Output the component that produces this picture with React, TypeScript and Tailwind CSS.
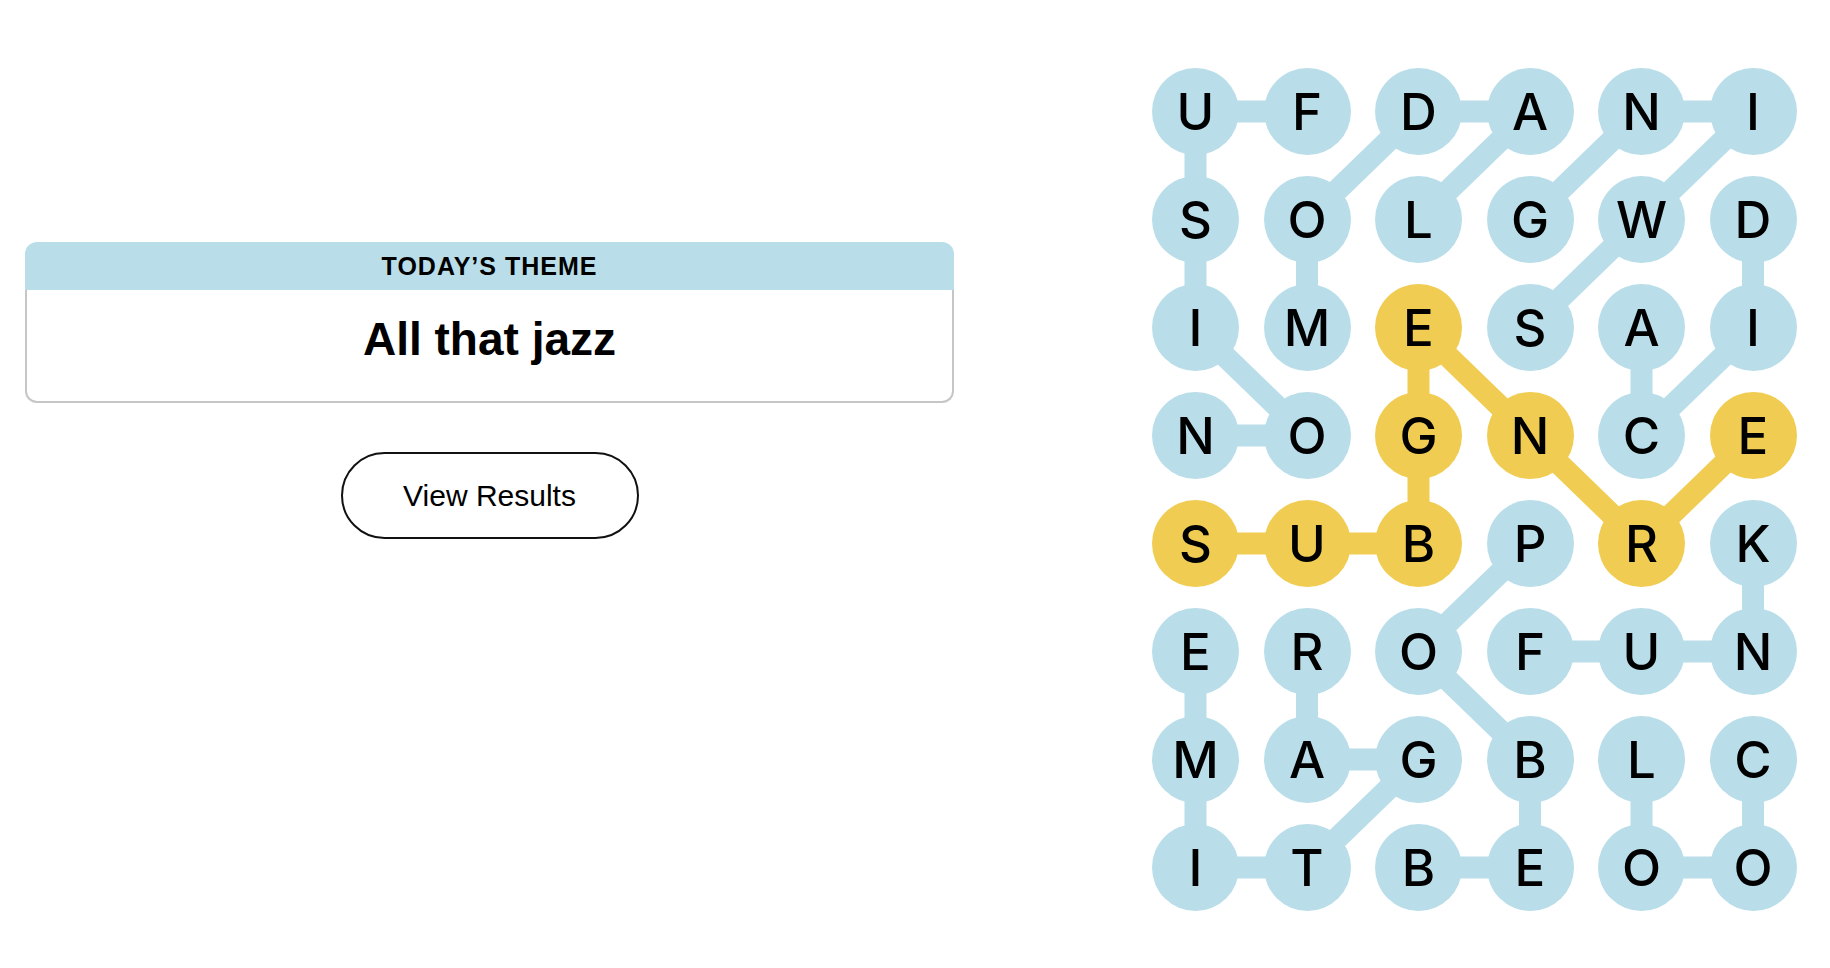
import React from "react";

const ROWS = ["UFDANI", "SOLGWD", "IMESAI", "NOGNCE", "SUBPRK", "EROFUN", "MAGBLC", "ITBEOO"];

const SPANGRAM = ["4,0", "4,1", "4,2", "3,2", "2,2", "3,3", "4,4", "3,5"];

// [row, col, row, col]
const WORD_LINKS = [
  // fusion
  [0, 1, 0, 0], [0, 0, 1, 0], [1, 0, 2, 0], [2, 0, 3, 1], [3, 1, 3, 0],
  // modal
  [2, 1, 1, 1], [1, 1, 0, 2], [0, 2, 0, 3], [0, 3, 1, 2],
  // swing
  [2, 3, 1, 4], [1, 4, 0, 5], [0, 5, 0, 4], [0, 4, 1, 3],
  // acid
  [2, 4, 3, 4], [3, 4, 2, 5], [2, 5, 1, 5],
  // funk
  [5, 3, 5, 4], [5, 4, 5, 5], [5, 5, 4, 5],
  // bebop
  [7, 2, 7, 3], [7, 3, 6, 3], [6, 3, 5, 2], [5, 2, 4, 3],
  // ragtime
  [5, 1, 6, 1], [6, 1, 6, 2], [6, 2, 7, 1], [7, 1, 7, 0], [7, 0, 6, 0], [6, 0, 5, 0],
  // cool
  [6, 5, 7, 5], [7, 5, 7, 4], [7, 4, 6, 4],
];

const SPAN_LINKS = [
  [4, 0, 4, 1], [4, 1, 4, 2], [4, 2, 3, 2], [3, 2, 2, 2], [2, 2, 3, 3], [3, 3, 4, 4], [4, 4, 3, 5],
];

const cx = (c: number) => 43.5 + c * 111.5;
const cy = (r: number) => 43.5 + r * 108;

const Board = () => {
  return (
    <div className="relative">
      <svg className="absolute inset-0" width="645" height="843">
        {WORD_LINKS.map(([r1, c1, r2, c2], i) => (
          <line key={"w" + i} x1={cx(c1)} y1={cy(r1)} x2={cx(c2)} y2={cy(r2)} stroke="#b9deea" strokeWidth="22" />
        ))}
        {SPAN_LINKS.map(([r1, c1, r2, c2], i) => (
          <line key={"s" + i} x1={cx(c1)} y1={cy(r1)} x2={cx(c2)} y2={cy(r2)} stroke="#f0cd52" strokeWidth="22" />
        ))}
      </svg>
      <div className="relative grid grid-cols-[repeat(6,87px)] gap-x-[24.5px] gap-y-[21px]">
        {ROWS.map((row, r) =>
          row.split("").map((ch, c) => (
            <div
              key={r + "-" + c}
              className={
                "flex h-[87px] w-[87px] items-center justify-center rounded-full text-[51px] font-medium leading-none text-black " +
                (SPANGRAM.includes(r + "," + c) ? "bg-[#f0cd52]" : "bg-[#b9deea]")
              }
            >
              {ch}
            </div>
          ))
        )}
      </div>
    </div>
  );
};

export default function App() {
  return (
    <div className="flex min-h-[968px] w-full bg-white font-['Inter',sans-serif]">
      <div className="w-[979px] px-[25px] pt-[242px] font-['Liberation_Sans',Arial,sans-serif]">
        <div className="flex flex-col">
          <div className="flex h-[48px] items-center justify-center rounded-t-[12px] bg-[#b9deea] pt-[2px]">
            <span className="text-[25px] font-bold tracking-[1px] text-black">TODAY’S THEME</span>
          </div>
          <div className="flex h-[113px] justify-center rounded-b-[12px] border-2 border-t-0 border-[#c6c6c6] pt-[26px]">
            <h2 className="text-[46px] font-bold leading-none text-black">All that jazz</h2>
          </div>
        </div>
        <div className="mt-[49px] flex justify-center">
          <button className="h-[87px] w-[298px] rounded-full border-2 border-[#111] bg-white text-[30px] text-black">
            View Results
          </button>
        </div>
      </div>
      <div className="ml-[173px] pt-[68px]">
        <Board />
      </div>
    </div>
  );
}
